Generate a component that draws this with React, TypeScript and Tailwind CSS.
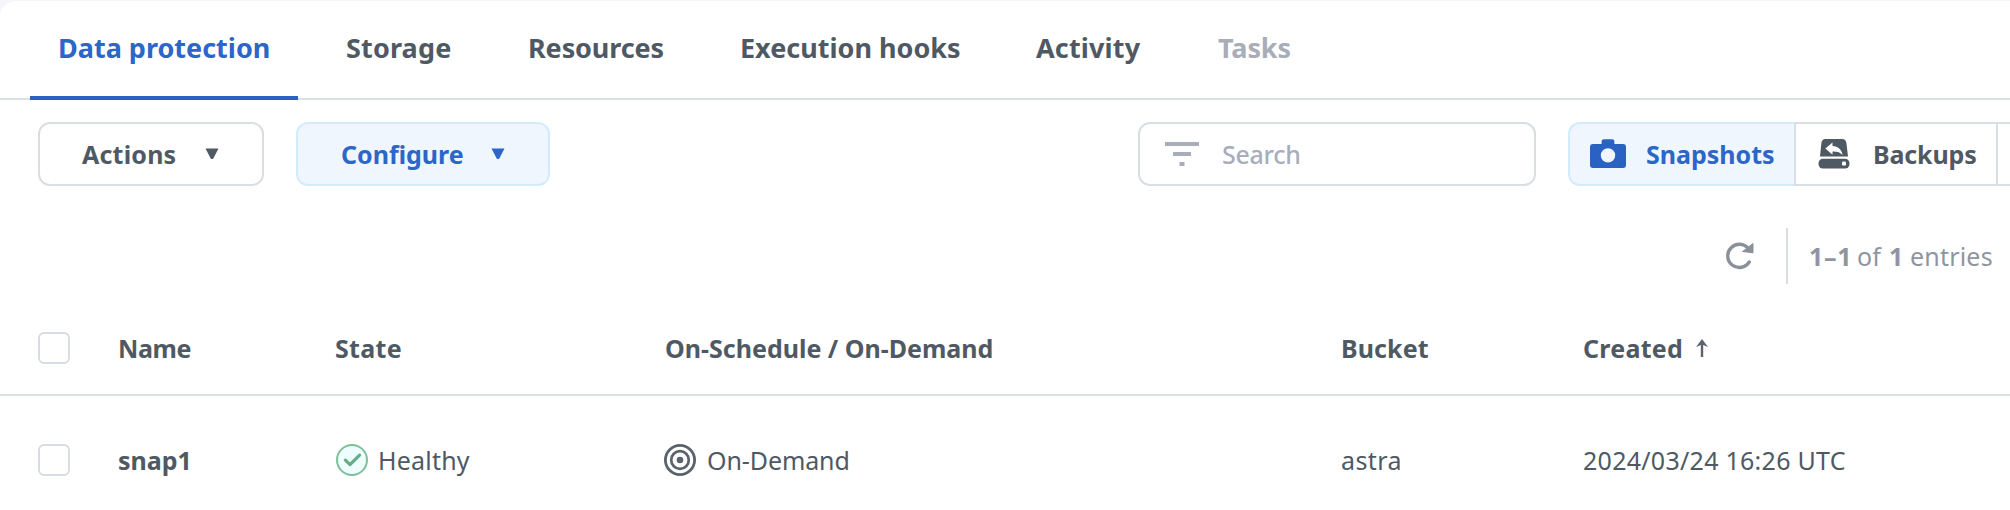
import React from "react";

const tabs = [
  { label: "Data protection", box: "w-[268px] border-[#2962c0] text-[#2b66c8]" },
  { label: "Storage", box: "w-[162px] border-transparent text-[#4f5964] tracking-[0.15px]" },
  { label: "Resources", box: "w-[192px] border-transparent text-[#4f5964] tracking-[-0.1px]" },
  { label: "Execution hooks", box: "w-[276px] border-transparent text-[#4f5964]" },
  { label: "Activity", box: "w-[162px] border-transparent text-[#4f5964] tracking-[0.15px]" },
  { label: "Tasks", box: "w-[130px] border-transparent text-[#a9adb8] tracking-[-0.1px]" },
];

function Caret({ className }: { className: string }) {
  return (
    <svg className={className} width="14" height="12" viewBox="0 0 14 12" fill="currentColor">
      <path d="M0.500 0.500h13L8.300 10.400q-1.300 1.400-2.600 0z" />
    </svg>
  );
}

function FilterIcon() {
  return (
    <svg width="34" height="24" viewBox="0 0 34 24" fill="#a9adbb">
      <rect x="0" y="0" width="34" height="4" />
      <rect x="8" y="10" width="18" height="4" />
      <rect x="14.5" y="20" width="5" height="4" />
    </svg>
  );
}

function CameraIcon() {
  return (
    <svg width="36" height="30" viewBox="0 0 36 30" fill="currentColor">
      <path
        fillRule="evenodd"
        d="M3 5h8.600V2.500Q11.600 0.300 13.800 0.300h8.400q2.200 0 2.200 2.200V5H33q3 0 3 3v18q0 3-3 3H3q-3 0-3-3V8q0-3 3-3zM18 9.200a7.200 7.200 0 1 0 0 14.400a7.200 7.200 0 1 0 0-14.400z"
      />
    </svg>
  );
}

function BackupIcon() {
  return (
    <svg width="32" height="30" viewBox="0 0 32 30" fill="currentColor">
      <path d="M7.500 0h16.500q3.800 0 4.400 4l1.600 13.500H2L3.400 4Q3.900 0 7.500 0z" />
      <path
        fill="#fff"
        d="M14.500 3.500v3.400c5.600 0.400 9.600 3.600 10 9.200c-2.300-3-5.200-3.800-10-3.700v3.400L7.300 9.600z"
      />
      <rect x="0.500" y="19.700" width="31" height="9.800" rx="4.500" />
      <rect x="24" y="22.600" width="4" height="4" rx="1.200" fill="#fff" />
    </svg>
  );
}

function RefreshIcon() {
  return (
    <svg width="30" height="30" viewBox="0 0 30 30" fill="none">
      <path d="M24.200 21A11.600 11.600 0 1 1 23.400 7.600" stroke="#8b9199" strokeWidth="3.400" strokeLinecap="round" />
      <path d="M28 2.500V11.800L17.500 10.500z" fill="#8b9199" stroke="#8b9199" strokeWidth="1" strokeLinejoin="round" />
    </svg>
  );
}

function HealthyIcon() {
  return (
    <svg width="32" height="32" viewBox="0 0 32 32" fill="none">
      <circle cx="16" cy="16" r="15" fill="#eefdfd" stroke="#7fbf9b" strokeWidth="2" />
      <path d="M9.400 16.200L14 20.600L23.600 11.200" stroke="#66ad85" strokeWidth="3.200" strokeLinecap="round" strokeLinejoin="round" />
    </svg>
  );
}

function TargetIcon() {
  return (
    <svg width="32" height="32" viewBox="0 0 32 32" fill="none" stroke="#59626d">
      <circle cx="16" cy="16" r="14.600" strokeWidth="2.800" />
      <circle cx="16" cy="16" r="8.800" strokeWidth="2.700" />
      <circle cx="16" cy="16" r="3.300" fill="#59626d" stroke="none" />
    </svg>
  );
}

function SortArrow() {
  return (
    <svg className="ml-[13px]" width="12" height="18" viewBox="0 0 12 18" fill="none" stroke="#59626d" strokeWidth="2.400">
      <path d="M6 18V2" />
      <path d="M0 8L6 0l6 8L6 5.500z" fill="#59626d" stroke="none" />
    </svg>
  );
}

function Checkbox() {
  return <span role="checkbox" aria-checked="false" className="size-8 rounded-md border-2 border-[#d9dce5] bg-white" />;
}

const columns = "grid grid-cols-[80px_218px_329px_676px_242px_1fr] items-center pl-[38px]";

export default function App() {
  return (
    <div className="h-screen w-full overflow-hidden whitespace-nowrap bg-[#f5f5fb] pt-px font-['Noto_Sans',sans-serif] text-[25px] leading-[34px] text-[#4f5964]">
      <div className="h-full overflow-hidden rounded-tl-2xl bg-white">
        <nav className="flex h-[99px] gap-5 pl-[30px] text-[27px] font-bold shadow-[inset_0_-2px_0_#dae0e5]">
          {tabs.map((tab) => (
            <div key={tab.label} className={`flex h-full shrink-0 items-center border-b-4 pl-[28px] pb-[2px] ${tab.box}`}>
              {tab.label}
            </div>
          ))}
        </nav>

        <div className="mt-[22px] flex h-16 w-[2100px] pl-[38px] font-bold">
          <button className="flex h-16 w-[226px] items-center rounded-xl border-2 border-[#d9dee4] pl-[42px] tracking-[0.2px]">
            Actions
            <Caret className="ml-[29px]" />
          </button>
          <button className="ml-8 flex h-16 w-[254px] items-center rounded-xl border-2 border-[#d3ecfd] bg-[#eff6fe] pl-[43px] text-[#2b66c8]">
            Configure
            <Caret className="ml-[27px]" />
          </button>
          <div className="ml-[588px] flex h-16 w-[398px] items-center rounded-xl border-2 border-[#d9dee4] pl-[25px]">
            <FilterIcon />
            <span className="ml-[23px] font-medium tracking-[-0.3px] text-[#a9adbb]">Search</span>
          </div>
          <div className="ml-8 flex h-16">
            <div className="flex w-[226px] items-center rounded-l-xl border-2 border-r-0 border-[#d3ecfd] bg-[#eff6fe] pl-5 text-[#2962c0]">
              <CameraIcon />
              <span className="ml-5 text-[#2b66c8]">Snapshots</span>
            </div>
            <div className="flex w-[202px] items-center border-2 border-r-0 border-[#d9dee4] pl-[22px]">
              <BackupIcon />
              <span className="ml-[23px] tracking-[-0.15px]">Backups</span>
            </div>
            <div className="w-[80px] border-2 border-[#d9dee4]" />
          </div>
        </div>

        <div className="mt-[42px] flex h-14 items-center pl-[1725px] text-[#8f959e]">
          <RefreshIcon />
          <span className="ml-[31px] h-14 w-0.5 shrink-0 bg-[#d9dee4]" />
          <span className="ml-[21px] w-[48px] shrink-0 font-bold tracking-[0.7px]">1–1</span>
          <span className="w-[32px] shrink-0">of</span>
          <span className="w-[21px] shrink-0 font-bold">1</span>
          <span className="tracking-[0.2px]">entries</span>
        </div>

        <div className={`mt-[18px] h-[94px] border-b-2 border-[#dae0e5] font-bold ${columns}`}>
          <Checkbox />
          <span className="tracking-[-0.4px]">Name</span>
          <span className="-ml-px tracking-[0.3px]">State</span>
          <span>On-Schedule / On-Demand</span>
          <span className="tracking-[0.1px]">Bucket</span>
          <span className="flex items-center tracking-[0.25px]">
            Created
            <SortArrow />
          </span>
        </div>

        <div className={`h-32 ${columns}`}>
          <Checkbox />
          <span className="font-bold">snap1</span>
          <span className="flex items-center gap-[10px] tracking-[0.2px]">
            <HealthyIcon />
            Healthy
          </span>
          <span className="-ml-px flex items-center gap-[11px] tracking-[-0.1px]">
            <TargetIcon />
            On-Demand
          </span>
          <span className="tracking-[0.4px]">astra</span>
          <span className="tracking-[0.27px]">2024/03/24 16:26 UTC</span>
        </div>
      </div>
    </div>
  );
}
